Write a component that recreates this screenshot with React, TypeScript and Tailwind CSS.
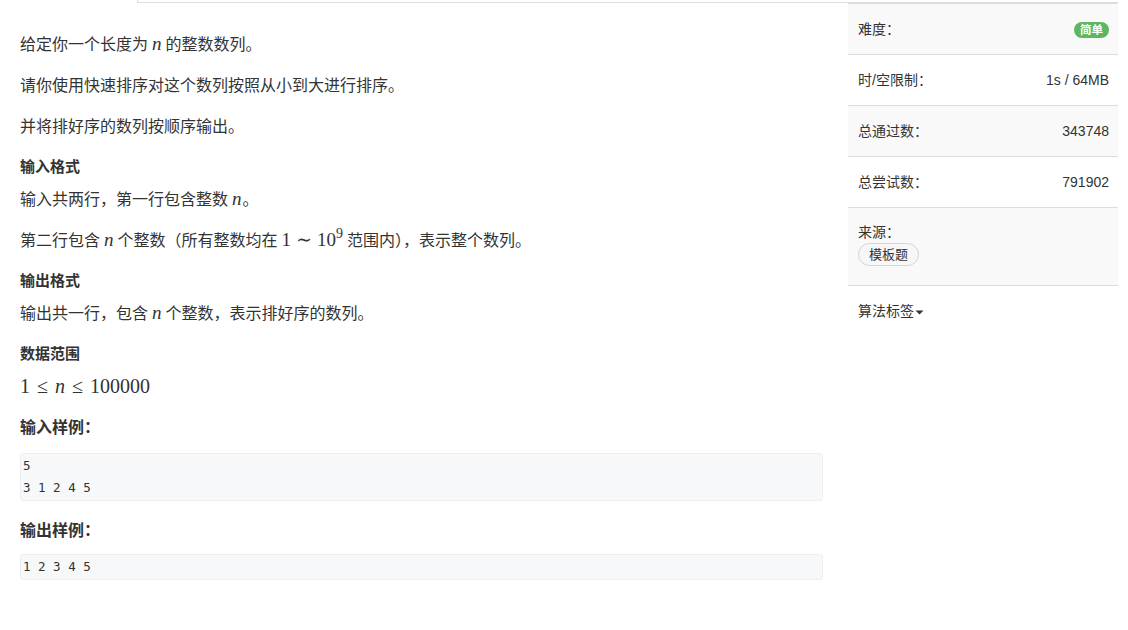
import React from "react";

const N = ({ tight }: { tight?: boolean }) => (
  <span
    className={`font-['Liberation_Serif','DejaVu_Serif',serif] italic text-[19px] leading-none ${
      tight ? "ml-[4px] mr-[1px]" : "mx-[4px]"
    }`}
  >
    n
  </span>
);

function P({ children, mb = "mb-[15px]" }: { children: React.ReactNode; mb?: string }) {
  return <p className={`text-[16px] leading-[26px] text-[#333] ${mb}`}>{children}</p>;
}

function H({ children, cls = "text-[15px] mb-[8px]" }: { children: React.ReactNode; cls?: string }) {
  return <h4 className={`font-bold leading-[24px] text-[#333] ${cls}`}>{children}</h4>;
}

function Row({ label, value, striped }: { label: string; value: React.ReactNode; striped?: boolean }) {
  return (
    <div
      className={`h-[51px] border-b border-[#dddddd] flex items-center justify-between pl-[10px] pr-[9px] text-[14px] text-[#333] ${
        striped ? "bg-[#f9f9f9]" : "bg-white"
      }`}
    >
      <span>{label}</span>
      <span>{value}</span>
    </div>
  );
}

export default function App() {
  return (
    <div className="w-[1128px] h-[630px] bg-white flex font-['Liberation_Sans','Noto_Sans_CJK_SC',sans-serif] overflow-hidden">
      {/* Left content */}
      <div className="w-[848px] flex flex-col">
        <div className="h-[3px] flex">
          <div className="w-[138px] border-r border-[#dddddd]" />
          <div className="flex-1 border-b border-[#dddddd]" />
        </div>
        <div className="pl-[20px] pr-[25px] pt-[29px]">
          <P>
            给定你一个长度为<N />的整数数列。
          </P>
          <P>请你使用快速排序对这个数列按照从小到大进行排序。</P>
          <P>并将排好序的数列按顺序输出。</P>
          <H>输入格式</H>
          <P>
            输入共两行，第一行包含整数<N tight />。
          </P>
          <P>
            第二行包含<N />个整数（所有整数均在
            <span className="font-['Liberation_Serif','DejaVu_Serif',serif] text-[19px] leading-none mx-[4px]">
              1<span className="mx-[5px]">∼</span>10
              <span className="text-[14px] relative -top-[8px]">9</span>
            </span>
            范围内），表示整个数列。
          </P>
          <H>输出格式</H>
          <P>
            输出共一行，包含<N />个整数，表示排好序的数列。
          </P>
          <H>数据范围</H>
          <div className="font-['Liberation_Serif','DejaVu_Serif',serif] text-[20px] leading-[24px] text-[#333] mb-[18px]">
            1<span className="mx-[7px]">≤</span>
            <span className="italic">n</span>
            <span className="mx-[7px]">≤</span>100000
          </div>
          <H cls="text-[16px] mb-[13px]">输入样例：</H>
          <pre className="bg-[#f7f8f9] border border-[#eceeef] rounded-[3px] px-[2px] py-[1px] font-['DejaVu_Sans_Mono',monospace] text-[12.5px] leading-[22px] text-[#333] mb-[18px]">
            {"5\n3 1 2 4 5"}
          </pre>
          <H cls="text-[16px] mb-[11px]">输出样例：</H>
          <pre className="bg-[#f7f8f9] border border-[#eceeef] rounded-[3px] px-[2px] py-[1px] font-['DejaVu_Sans_Mono',monospace] text-[12.5px] leading-[22px] text-[#333]">
            {"1 2 3 4 5"}
          </pre>
        </div>
      </div>

      {/* Right sidebar */}
      <div className="w-[270px] pt-[2px]">
        <div className="border-t-2 border-[#dddddd]">
          <Row
            label="难度："
            striped
            value={
              <span className="inline-flex items-center justify-center h-[16px] px-[6px] rounded-full bg-[#5cb85c] text-white text-[11.5px] font-bold leading-none">
                简单
              </span>
            }
          />
          <Row label="时/空限制：" value="1s / 64MB" />
          <Row label="总通过数：" value="343748" striped />
          <Row label="总尝试数：" value="791902" />
          <div className="h-[78px] border-b border-[#dddddd] bg-[#f9f9f9] pl-[10px] pt-[14px] text-[14px] text-[#333]">
            <div className="leading-[20px]">来源：</div>
            <span className="mt-[1px] inline-flex items-center justify-center w-[61px] h-[23px] rounded-full border border-[#d5d5d5] bg-[#f7f7f7] text-[13px] text-[#333]">
              模板题
            </span>
          </div>
          <div className="h-[50px] flex items-center pl-[10px] text-[14px] text-[#333]">
            <span>算法标签</span>
            <svg width="9" height="5" viewBox="0 0 9 5" className="ml-[1px] mt-[2px]">
              <path d="M0.5 0.5 L8.5 0.5 L4.5 4.5 Z" fill="#333" />
            </svg>
          </div>
        </div>
      </div>
    </div>
  );
}
